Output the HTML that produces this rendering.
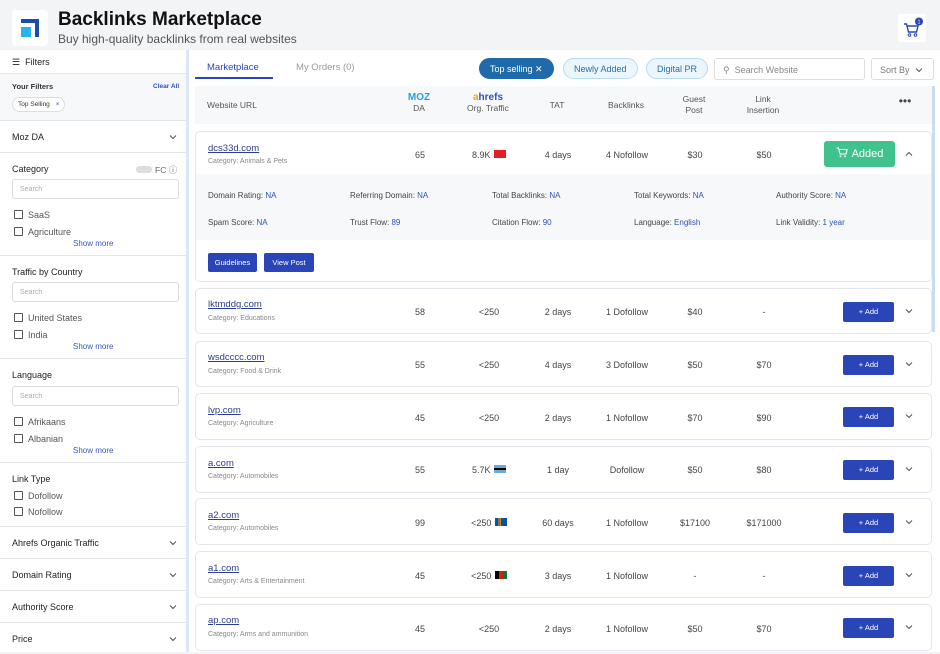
<!DOCTYPE html>
<html><head><meta charset="utf-8"><style>
*{box-sizing:border-box;margin:0;padding:0}
body{width:940px;height:652px;overflow:hidden;background:#f3f4f6;font-family:"Liberation Sans",sans-serif;color:#333;position:relative}
.a{position:absolute}
.logo{left:12px;top:10px;width:36px;height:36px;background:#fff;border-radius:4px}
h1{position:absolute;left:58px;top:9px;font-size:19px;font-weight:bold;color:#111}
.sub{left:58px;top:32px;font-size:12px;color:#555}
.cart{left:898px;top:14px;width:28px;height:28px;background:#fff;border-radius:3px}
.side{left:0;top:50px;width:186px;height:602px;background:#fff}
.sec{position:absolute;left:0;width:186px;border-top:1px solid #e5e7eb;font-size:9px;color:#333}
.sec b{font-weight:normal;color:#222}
.chev{position:absolute;right:9px;width:8px;height:6px}
.inp{position:absolute;left:12px;width:167px;height:20px;border:1px solid #ddd;border-radius:3px;font-size:7px;color:#aaa;padding:6px 7px}
.cb{position:absolute;left:14px;font-size:9px;color:#555}
.cb:before{content:"";display:inline-block;width:7px;height:7px;border:1px solid #555;border-radius:1px;margin-right:5px;vertical-align:-1px}
.more{position:absolute;left:73px;font-size:8px;color:#3a57c4}
.vline{left:186px;top:50px;width:3px;height:602px;background:#dbe6f8}
.main{left:189px;top:50px;width:751px;height:602px;background:#fff}
.tab{font-size:9.5px}
.pill{top:58px;height:21px;border-radius:11px;font-size:9px;padding:5px 10px;border:1px solid #b9dcf0;background:#eaf5fc;color:#2a6fa8}
.thead{left:195px;top:86px;width:737px;height:38px;background:#f7f8fa;font-size:8.5px;color:#555}
.th{position:absolute;text-align:center;width:80px;margin-left:-40px;line-height:11px}
.card{position:absolute;left:195px;width:737px;border:1px solid #e3e6ec;border-radius:5px;background:#fff}
.url{position:absolute;left:12px;font-size:9.5px;color:#2b3e8f;text-decoration:underline}
.cat{position:absolute;left:12px;font-size:7px;color:#888}
.c{position:absolute;width:90px;margin-left:-45px;text-align:center;font-size:9px;color:#444}
.add{position:absolute;left:647px;width:51px;height:20px;background:#2a45b8;color:#fff;font-size:7.5px;text-align:center;line-height:20px;border-radius:2px}
.dn{position:absolute;left:709px;width:8px;height:6px}
.det{position:absolute;font-size:8px;color:#444}
.det span{color:#2a52b8}
.fl{display:inline-block;width:12px;height:8px;vertical-align:0;margin-left:1px}
</style></head><body>
<svg width="0" height="0" style="position:absolute"><defs><symbol id="cv" viewBox="0 0 8 6"><path d="M1 1.5l3 3 3-3" fill="none" stroke="#555" stroke-width="1"/></symbol><symbol id="cu" viewBox="0 0 8 6"><path d="M1 4.5l3-3 3 3" fill="none" stroke="#555" stroke-width="1"/></symbol></defs></svg>
<div class="a logo"><div class="a" style="left:9px;top:9px;width:18px;height:18px;background:#1a4bb0"></div><div class="a" style="left:9px;top:13px;width:14px;height:14px;background:#fff"></div><div class="a" style="left:9px;top:17px;width:10px;height:10px;background:#22b5ee"></div></div>
<h1>Backlinks Marketplace</h1>
<div class="a sub">Buy high-quality backlinks from real websites</div>
<div class="a cart"><svg width="28" height="28" viewBox="0 0 28 28"><path d="M6 10h2.5l2 8h8l1.5-6H9.5" fill="none" stroke="#2a45b8" stroke-width="1.4"/><circle cx="11.5" cy="21" r="1.3" fill="none" stroke="#2a45b8"/><circle cx="17.5" cy="21" r="1.3" fill="none" stroke="#2a45b8"/><circle cx="21" cy="7.5" r="4" fill="#2a45b8"/><text x="21" y="9.5" font-size="5" fill="#fff" text-anchor="middle" font-family="Liberation Sans">1</text></svg></div>

<div class="a side">
<div class="a" style="left:12px;top:7px;font-size:9px;color:#222">☰&nbsp; Filters</div>
<div class="a" style="left:0;top:23px;width:186px;height:47px;background:#f7f8fa;border-top:1px solid #e5e7eb"></div>
<div class="a" style="left:12px;top:32px;font-size:7.5px;color:#333;font-weight:bold">Your Filters</div>
<div class="a" style="left:153px;top:33px;font-size:6.5px;color:#2a52b8;font-weight:bold">Clear All</div>
<div class="a" style="left:12px;top:47px;height:15px;border:1px solid #ddd;border-radius:8px;background:#fff;font-size:6.5px;padding:3px 5px;color:#333">Top Selling <span style="color:#2a52b8;margin-left:4px">×</span></div>
<div class="sec" style="top:70px;height:32px"><b class="a" style="left:12px;top:11px">Moz DA</b><svg class="chev" style="top:13px"><use href="#cv"/></svg></div>
<div class="sec" style="top:102px;height:103px"><b class="a" style="left:12px;top:11px">Category</b>
<div class="a" style="left:136px;top:13px;width:16px;height:7px;border-radius:4px;background:#ddd"></div><span class="a" style="left:155px;top:11px;font-size:8.5px;color:#666">FC ⓘ</span>
<div class="inp" style="top:26px">Search</div><div class="cb" style="top:57px">SaaS</div><div class="cb" style="top:74px">Agriculture</div><div class="more" style="top:86px">Show more</div></div>
<div class="sec" style="top:205px;height:103px"><b class="a" style="left:12px;top:11px">Traffic by Country</b>
<div class="inp" style="top:26px">Search</div><div class="cb" style="top:57px">United States</div><div class="cb" style="top:74px">India</div><div class="more" style="top:86px">Show more</div></div>
<div class="sec" style="top:308px;height:104px"><b class="a" style="left:12px;top:11px">Language</b>
<div class="inp" style="top:27px">Search</div><div class="cb" style="top:58px">Afrikaans</div><div class="cb" style="top:75px">Albanian</div><div class="more" style="top:87px">Show more</div></div>
<div class="sec" style="top:412px;height:64px"><b class="a" style="left:12px;top:11px">Link Type</b><div class="cb" style="top:28px">Dofollow</div><div class="cb" style="top:44px">Nofollow</div></div>
<div class="sec" style="top:476px;height:32px"><b class="a" style="left:12px;top:11px">Ahrefs Organic Traffic</b><svg class="chev" style="top:13px"><use href="#cv"/></svg></div>
<div class="sec" style="top:508px;height:32px"><b class="a" style="left:12px;top:11px">Domain Rating</b><svg class="chev" style="top:13px"><use href="#cv"/></svg></div>
<div class="sec" style="top:540px;height:32px"><b class="a" style="left:12px;top:11px">Authority Score</b><svg class="chev" style="top:13px"><use href="#cv"/></svg></div>
<div class="sec" style="top:572px;height:32px"><b class="a" style="left:12px;top:11px">Price</b><svg class="chev" style="top:13px"><use href="#cv"/></svg></div>
</div>
<div class="a vline"></div>
<div class="a main"></div>
<div class="a tab" style="left:207px;top:62px;color:#2a45b8">Marketplace</div>
<div class="a" style="left:195px;top:77px;width:78px;height:2px;background:#2a45b8"></div>
<div class="a tab" style="left:296px;top:62px;color:#999">My Orders (0)</div>
<div class="a pill" style="left:479px;background:#1f6aa8;color:#fff;border-color:#1f6aa8">Top selling ✕</div>
<div class="a pill" style="left:563px">Newly Added</div>
<div class="a pill" style="left:646px">Digital PR</div>
<div class="a" style="left:714px;top:58px;width:151px;height:22px;border:1px solid #ddd;border-radius:3px;font-size:9px;color:#888;padding:6px 8px">⚲ &nbsp;Search Website</div>
<div class="a" style="left:871px;top:58px;width:63px;height:22px;border:1px solid #ddd;border-radius:3px;font-size:9px;color:#777;padding:6px 8px">Sort By <svg width="8" height="6" style="margin-left:3px"><use href="#cv"/></svg></div>
<div class="a thead">
<span class="a" style="left:12px;top:14px">Website URL</span>
<div class="th" style="left:224px;top:6px"><b style="color:#2b9be0;font-size:10px">MOZ</b><br>DA</div>
<div class="th" style="left:293px;top:6px"><b style="color:#2a52c8;font-size:10px"><span style="color:#f39c1c">a</span>hrefs</b><br>Org. Traffic</div>
<div class="th" style="left:362px;top:14px">TAT</div>
<div class="th" style="left:431px;top:14px">Backlinks</div>
<div class="th" style="left:499px;top:8px">Guest<br>Post</div>
<div class="th" style="left:568px;top:8px">Link<br>Insertion</div>
<div class="th" style="left:710px;top:10px;font-size:12px;color:#444">•••</div>
</div>
<div class="a" style="left:932px;top:86px;width:3px;height:246px;background:#c9dcf5"></div>

<div class="card" style="top:131px;height:151px">
<div class="a" style="left:0;top:42px;width:735px;height:66px;background:#f7f8fa"></div>
<div class="url" style="top:11px">dcs33d.com</div><div class="cat" style="top:26px">Category: Animals &amp; Pets</div>
<div class="c" style="left:224px;top:18px">65</div><div class="c" style="left:293px;top:18px">8.9K <span class="fl" style="background:#e41e20"></span></div>
<div class="c" style="left:362px;top:18px">4 days</div><div class="c" style="left:431px;top:18px">4 Nofollow</div><div class="c" style="left:499px;top:18px">$30</div><div class="c" style="left:568px;top:18px">$50</div>
<div class="a" style="left:628px;top:9px;width:71px;height:26px;background:#3fc28c;border-radius:3px;color:#fff;font-size:11px;text-align:center;line-height:26px"><svg width="12" height="11" viewBox="0 0 12 11" style="vertical-align:-1px;margin-right:4px"><path d="M0.5 1h2l1.5 6h6l1.2-4.5H3" fill="none" stroke="#fff" stroke-width="1.1"/><circle cx="4.5" cy="9.3" r=".9" fill="#fff"/><circle cx="9" cy="9.3" r=".9" fill="#fff"/></svg>Added</div>
<svg class="dn" style="top:19px"><use href="#cu"/></svg>
<div class="det" style="left:12px;top:59px">Domain Rating: <span>NA</span></div>
<div class="det" style="left:154px;top:59px">Referring Domain: <span>NA</span></div>
<div class="det" style="left:296px;top:59px">Total Backlinks: <span>NA</span></div>
<div class="det" style="left:438px;top:59px">Total Keywords: <span>NA</span></div>
<div class="det" style="left:580px;top:59px">Authority Score: <span>NA</span></div>
<div class="det" style="left:12px;top:86px">Spam Score: <span>NA</span></div>
<div class="det" style="left:154px;top:86px">Trust Flow: <span>89</span></div>
<div class="det" style="left:296px;top:86px">Citation Flow: <span>90</span></div>
<div class="det" style="left:438px;top:86px">Language: <span>English</span></div>
<div class="det" style="left:580px;top:86px">Link Validity: <span>1 year</span></div>
<div class="a" style="left:12px;top:121px;width:49px;height:19px;background:#2a45b8;color:#fff;font-size:7.5px;text-align:center;line-height:19px;border-radius:2px">Guidelines</div>
<div class="a" style="left:68px;top:121px;width:50px;height:19px;background:#2a45b8;color:#fff;font-size:7.5px;text-align:center;line-height:19px;border-radius:2px">View Post</div>
</div>

<div class="card" style="top:288px;height:46px"><div class="url" style="top:10px">lktmddg.com</div><div class="cat" style="top:26px">Category: Educations</div><div class="c" style="left:224px;top:18px">58</div><div class="c" style="left:293px;top:18px">&lt;250</div><div class="c" style="left:362px;top:18px">2 days</div><div class="c" style="left:431px;top:18px">1 Dofollow</div><div class="c" style="left:499px;top:18px">$40</div><div class="c" style="left:568px;top:18px">-</div><div class="add" style="top:13px">+ Add</div><svg class="dn" style="top:19px"><use href="#cv"/></svg></div>
<div class="card" style="top:341px;height:46px"><div class="url" style="top:10px">wsdcccc.com</div><div class="cat" style="top:26px">Category: Food &amp; Drink</div><div class="c" style="left:224px;top:18px">55</div><div class="c" style="left:293px;top:18px">&lt;250</div><div class="c" style="left:362px;top:18px">4 days</div><div class="c" style="left:431px;top:18px">3 Dofollow</div><div class="c" style="left:499px;top:18px">$50</div><div class="c" style="left:568px;top:18px">$70</div><div class="add" style="top:13px">+ Add</div><svg class="dn" style="top:19px"><use href="#cv"/></svg></div>
<div class="card" style="top:393px;height:47px"><div class="url" style="top:11px">lvp.com</div><div class="cat" style="top:26px">Category: Agriculture</div><div class="c" style="left:224px;top:19px">45</div><div class="c" style="left:293px;top:19px">&lt;250</div><div class="c" style="left:362px;top:19px">2 days</div><div class="c" style="left:431px;top:19px">1 Nofollow</div><div class="c" style="left:499px;top:19px">$70</div><div class="c" style="left:568px;top:19px">$90</div><div class="add" style="top:13px">+ Add</div><svg class="dn" style="top:19px"><use href="#cv"/></svg></div>
<div class="card" style="top:446px;height:47px"><div class="url" style="top:11px">a.com</div><div class="cat" style="top:26px">Category: Automobiles</div><div class="c" style="left:224px;top:18px">55</div><div class="c" style="left:293px;top:18px">5.7K <span class="fl" style="background:linear-gradient(#6da9d2 40%,#000 40%,#000 60%,#6da9d2 60%)"></span></div><div class="c" style="left:362px;top:18px">1 day</div><div class="c" style="left:431px;top:18px">Dofollow</div><div class="c" style="left:499px;top:18px">$50</div><div class="c" style="left:568px;top:18px">$80</div><div class="add" style="top:13px">+ Add</div><svg class="dn" style="top:19px"><use href="#cv"/></svg></div>
<div class="card" style="top:498px;height:47px"><div class="url" style="top:11px">a2.com</div><div class="cat" style="top:26px">Category: Automobiles</div><div class="c" style="left:224px;top:19px">99</div><div class="c" style="left:293px;top:19px">&lt;250 <span class="fl" style="background:linear-gradient(90deg,#0053a5 30%,#ffce00 30%,#d21034 40%,#ffce00 50%,#0053a5 50%)"></span></div><div class="c" style="left:362px;top:19px">60 days</div><div class="c" style="left:431px;top:19px">1 Nofollow</div><div class="c" style="left:499px;top:19px">$17100</div><div class="c" style="left:568px;top:19px">$171000</div><div class="add" style="top:14px">+ Add</div><svg class="dn" style="top:20px"><use href="#cv"/></svg></div>
<div class="card" style="top:551px;height:47px"><div class="url" style="top:11px">a1.com</div><div class="cat" style="top:26px">Category: Arts &amp; Entertainment</div><div class="c" style="left:224px;top:19px">45</div><div class="c" style="left:293px;top:19px">&lt;250 <span class="fl" style="background:linear-gradient(90deg,#000 33%,#d32011 33%,#d32011 66%,#007a36 66%)"></span></div><div class="c" style="left:362px;top:19px">3 days</div><div class="c" style="left:431px;top:19px">1 Nofollow</div><div class="c" style="left:499px;top:19px">-</div><div class="c" style="left:568px;top:19px">-</div><div class="add" style="top:14px">+ Add</div><svg class="dn" style="top:20px"><use href="#cv"/></svg></div>
<div class="card" style="top:604px;height:47px"><div class="url" style="top:10px">ap.com</div><div class="cat" style="top:26px">Category: Arms and ammunition</div><div class="c" style="left:224px;top:19px">45</div><div class="c" style="left:293px;top:19px">&lt;250</div><div class="c" style="left:362px;top:19px">2 days</div><div class="c" style="left:431px;top:19px">1 Nofollow</div><div class="c" style="left:499px;top:19px">$50</div><div class="c" style="left:568px;top:19px">$70</div><div class="add" style="top:13px">+ Add</div><svg class="dn" style="top:19px"><use href="#cv"/></svg></div>
</body></html>
